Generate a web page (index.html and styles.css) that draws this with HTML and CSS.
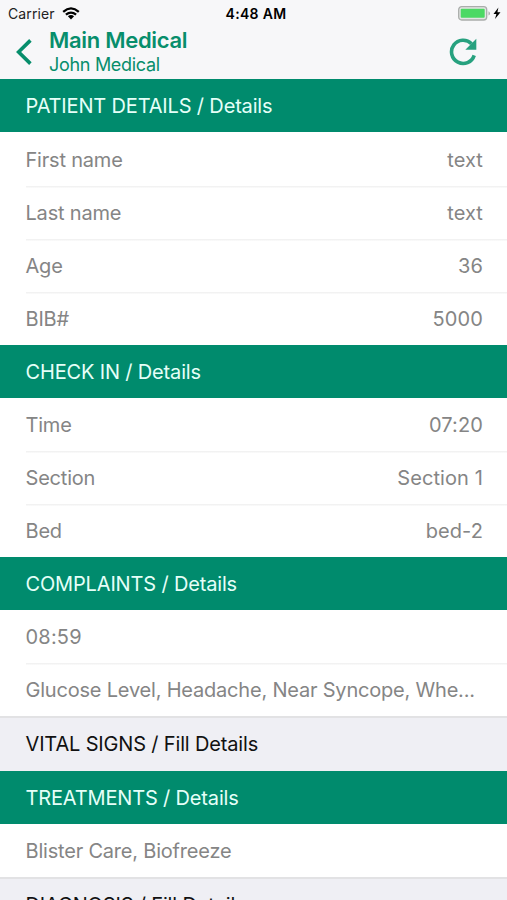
FILE: index.html
```html
<!DOCTYPE html>
<html lang="en">
<head>
<meta charset="utf-8">
<title>Main Medical</title>
<link rel="stylesheet" href="styles.css">
</head>
<body>
<div class="screen">
  <header class="top">
    <div class="status">
      <div class="carrier">
        <span>Carrier</span>
        <svg class="wifi" viewBox="0 0 18 13"><path d="M1.2 4.8Q9-2 16.8 4.8M3.9 7.7Q9 3.5 14.1 7.7" fill="none" stroke="#000" stroke-width="2.3"/><path d="M5.9 9.3Q9 6.8 12.1 9.3L9 12.6Z"/></svg>
      </div>
      <div class="clock">4:48 AM</div>
      <div class="power">
        <svg class="battery" viewBox="0 0 33 15"><rect x=".7" y=".7" width="28" height="13.3" rx="3" fill="#e4e6e4" stroke="#aaadab" stroke-width="1.3"/><rect x="2.7" y="2.8" width="24" height="9" rx="1" fill="#4cd964"/><path d="M30.5 5.2Q32 6 32 7.4T30.5 9.6Z" fill="#aaadab"/></svg>
        <svg class="bolt" viewBox="0 0 8 13"><path d="M5.4.5.5 7H3.4L2 12 7.5 5.2H4.4Z"/></svg>
      </div>
    </div>
    <nav class="nav">
      <svg class="back" viewBox="0 0 18 28"><path d="M15.4 2.4 3.6 14 15.4 25.6" fill="none" stroke="#078e6c" stroke-width="3.6"/></svg>
      <div class="titles">
        <h1>Main Medical</h1>
        <p>John Medical</p>
      </div>
      <svg class="refresh" viewBox="0 0 28 28"><path d="M25.2 17.4A11.6 11.6 0 1 1 22.5 5.8" fill="none" stroke="#27a17f" stroke-width="3.6"/><path d="M27.3 .8V11.8H16.3Z" fill="#27a17f"/></svg>
    </nav>
  </header>
  <main>
    <h2 class="section"><span>PATIENT DETAILS / Details</span></h2>
    <div class="row"><span>First name</span><span class="value">text</span></div>
    <div class="row"><span>Last name</span><span class="value">text</span></div>
    <div class="row"><span>Age</span><span class="value">36</span></div>
    <div class="row"><span>BIB#</span><span class="value">5000</span></div>
    <h2 class="section"><span>CHECK IN / Details</span></h2>
    <div class="row"><span>Time</span><span class="value">07:20</span></div>
    <div class="row"><span>Section</span><span class="value">Section 1</span></div>
    <div class="row"><span>Bed</span><span class="value">bed-2</span></div>
    <h2 class="section"><span>COMPLAINTS / Details</span></h2>
    <div class="row"><span class="time">08:59</span></div>
    <div class="row"><span>Glucose Level, Headache, Near Syncope, Whe...</span></div>
    <h2 class="section empty"><span>VITAL SIGNS / Fill Details</span></h2>
    <h2 class="section"><span>TREATMENTS / Details</span></h2>
    <div class="row"><span>Blister Care, Biofreeze</span></div>
    <h2 class="section empty"><span>DIAGNOSIS / Fill Details</span></h2>
  </main>
</div>
</body>
</html>
```
FILE: styles.css
```css
* { box-sizing: border-box; }
body { margin: 0; font-family: Inter, "Liberation Sans", sans-serif; background: #fff; }
h1, h2, p { margin: 0; font-weight: 400; }
svg { display: block; flex: none; }
.screen { height: 900px; overflow: hidden; }
.top { height: 79.3px; background: #f7f7f9; }
.status { height: 27px; display: grid; grid-template-columns: 1fr auto 1fr; align-items: center; padding: 0 6px 0 8px; font-size: 14px; line-height: 27px; color: #222; }
.carrier { display: flex; align-items: center; gap: 7px; letter-spacing: .1px; }
.wifi { width: 18px; height: 13px; }
.clock { font-weight: 600; color: #000; letter-spacing: .3px; padding-left: 3px; }
.power { display: flex; justify-content: flex-end; align-items: center; gap: 2px; }
.battery { width: 33px; height: 15px; }
.bolt { width: 8px; height: 13px; }
.nav { height: 52px; display: flex; padding: 0 30px 0 15px; color: #078e6c; }
.back { width: 18px; height: 28px; margin-top: 11px; }
.titles { flex: 1; padding-left: 16px; }
.titles h1 { font-size: 22px; line-height: 27px; font-weight: 600; letter-spacing: -.3px; }
.titles p { font-size: 18px; line-height: 22px; letter-spacing: -.3px; }
.refresh { width: 28px; height: 28px; margin-top: 11px; }
.section, .row { height: 53.05px; display: flex; align-items: center; justify-content: space-between; padding: 1px 24px 0 25.5px; font-size: 20px; line-height: 24px; white-space: nowrap; letter-spacing: -.2px; }
.section { height: 53.2px; background: #008b6d; color: #e5fff8; letter-spacing: -.16px; }
.row { color: #858585; }
.value { letter-spacing: .1px; }
.time { letter-spacing: .2px; }
.row + .row { background: linear-gradient(#f2f2f2, #f2f2f2) 26px 0 / 100% 1.5px no-repeat; }
.empty { height: 54.3px; padding-top: 0; background: #efeff4; color: #111; border-top: 2px solid #e2e2e4; }
```
